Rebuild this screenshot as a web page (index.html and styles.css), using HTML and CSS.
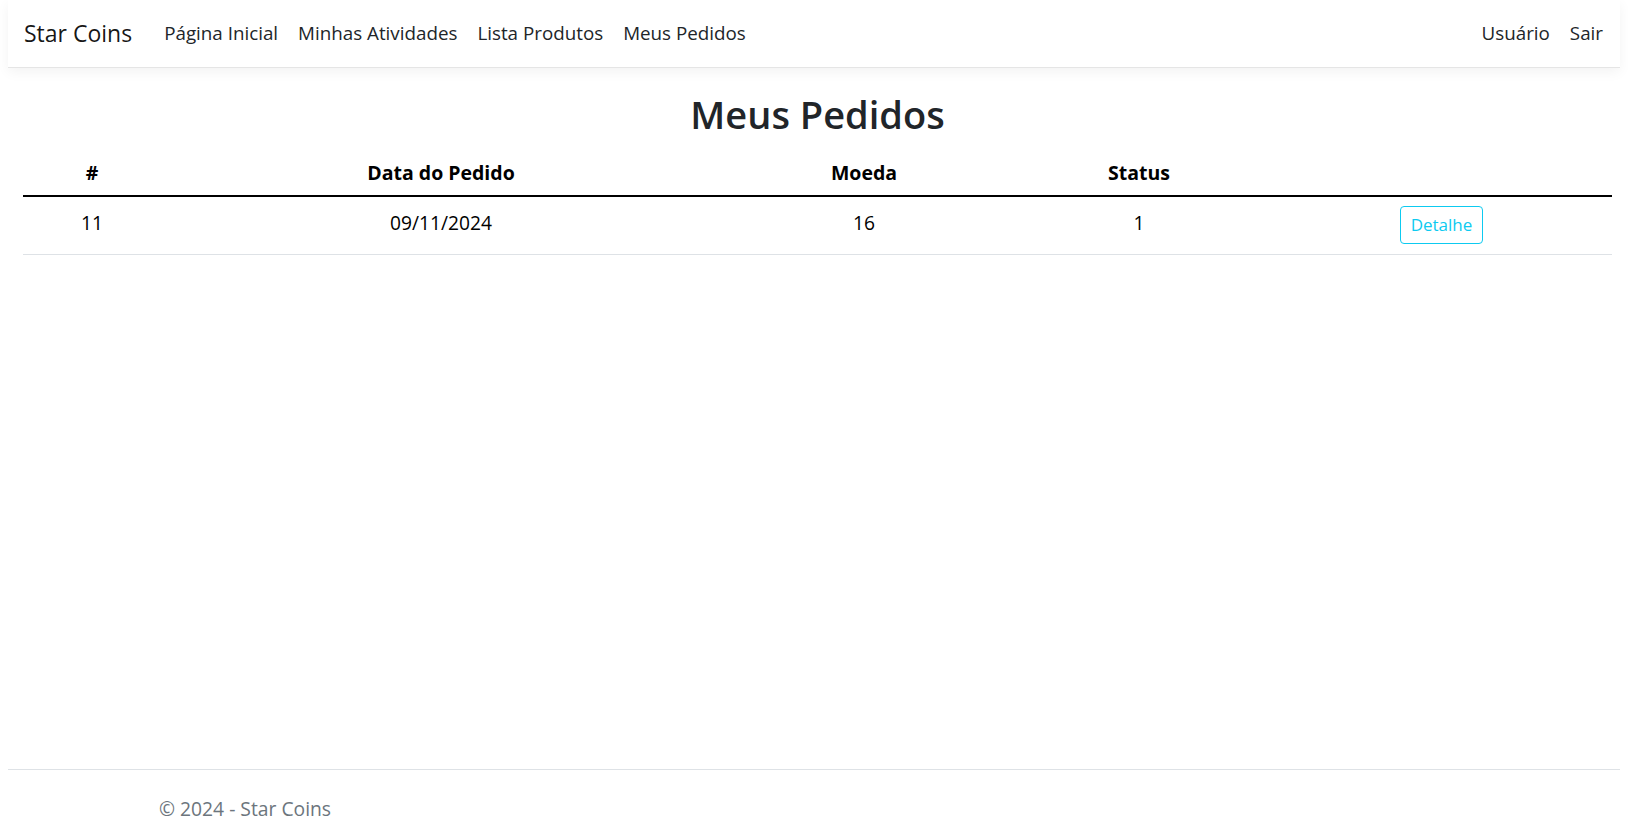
FILE: index.html
```html
<!DOCTYPE html>
<html lang="pt-BR">
<head>
<meta charset="utf-8">
<title>Meus Pedidos - Star Coins</title>
<link rel="stylesheet" href="styles.css">
</head>
<body>
<div class="page">
  <header class="navbar">
    <a class="brand" href="#">Star Coins</a>
    <nav class="nav-main">
      <a class="nav-link" href="#">Página Inicial</a>
      <a class="nav-link" href="#">Minhas Atividades</a>
      <a class="nav-link" href="#">Lista Produtos</a>
      <a class="nav-link" href="#">Meus Pedidos</a>
    </nav>
    <nav class="nav-user">
      <a class="nav-link" href="#">Usuário</a>
      <a class="nav-link" href="#">Sair</a>
    </nav>
  </header>

  <main class="main">
    <h1 class="title">Meus Pedidos</h1>
    <table class="orders">
      <colgroup>
        <col class="c-id">
        <col class="c-date">
        <col class="c-coin">
        <col class="c-status">
        <col class="c-action">
      </colgroup>
      <thead>
        <tr>
          <th>#</th>
          <th>Data do Pedido</th>
          <th>Moeda</th>
          <th>Status</th>
          <th></th>
        </tr>
      </thead>
      <tbody>
        <tr>
          <td>11</td>
          <td>09/11/2024</td>
          <td>16</td>
          <td>1</td>
          <td class="action"><a class="btn-detail" href="#">Detalhe</a></td>
        </tr>
      </tbody>
    </table>
  </main>

  <footer class="footer">
    <div class="footer-text">&copy; 2024 - Star Coins</div>
  </footer>
</div>
</body>
</html>
```

FILE: styles.css
```css
* { box-sizing: border-box; }

html, body {
  margin: 0;
  padding: 0;
  background: #fff;
}

body {
  font-family: "Open Sans", "Noto Sans", "Liberation Sans", sans-serif;
  font-size: 19.2px;
  color: #212529;
}

a { text-decoration: none; }

.page {
  min-height: 100vh;
  display: flex;
  flex-direction: column;
  padding: 0 8px;
}

/* Navbar */
.navbar {
  height: 68px;
  display: flex;
  align-items: center;
  padding: 0 7px 2px 16px;
  background: #fff;
  border-bottom: 1px solid #e5e5e5;
  box-shadow: 0 4px 12px rgba(0, 0, 0, 0.05);
}

.brand {
  font-size: 23px;
  line-height: 34px;
  color: rgba(0, 0, 0, 0.92);
  margin-right: 22px;
  padding-top: 1px;
}

.nav-main,
.nav-user {
  display: flex;
}

.nav-user { margin-left: auto; }

.nav-link {
  font-size: 18.8px;
  line-height: 28px;
  padding: 1px 10px 0;
  color: #212529;
}

/* Main */
.main {
  flex: 1;
  padding: 0 8px 0 15px;
}

.title {
  margin: 24px 0 12px;
  text-align: center;
  font-size: 38px;
  line-height: 45.6px;
  font-weight: 600;
  color: #212529;
}

.orders {
  width: 100%;
  border-collapse: collapse;
  table-layout: fixed;
  color: #000;
}

.c-id { width: 138px; }
.c-date { width: 560px; }
.c-coin { width: 286px; }
.c-status { width: 264px; }

.orders th {
  font-weight: 700;
  font-size: 19.5px;
  line-height: 29px;
  padding: 8px;
  text-align: center;
  border-bottom: 2px solid #000;
}

.orders td {
  padding: 9px 8px 10px;
  text-align: center;
  vertical-align: top;
  line-height: 33px;
  border-bottom: 1px solid #dee2e6;
}

.orders td.action {
  line-height: 0;
}

.btn-detail {
  display: inline-block;
  height: 38px;
  padding: 0 10px;
  font-size: 17px;
  line-height: 36px;
  color: #0dcaf0;
  border: 1px solid #0dcaf0;
  border-radius: 4px;
  background: transparent;
}

/* Footer */
.footer {
  height: 67px;
  border-top: 1px solid #dee2e6;
  padding-top: 24px;
}

.footer-text {
  padding-left: 151px;
  line-height: 29px;
  font-size: 19.3px;
  color: #6c757d;
}
```
